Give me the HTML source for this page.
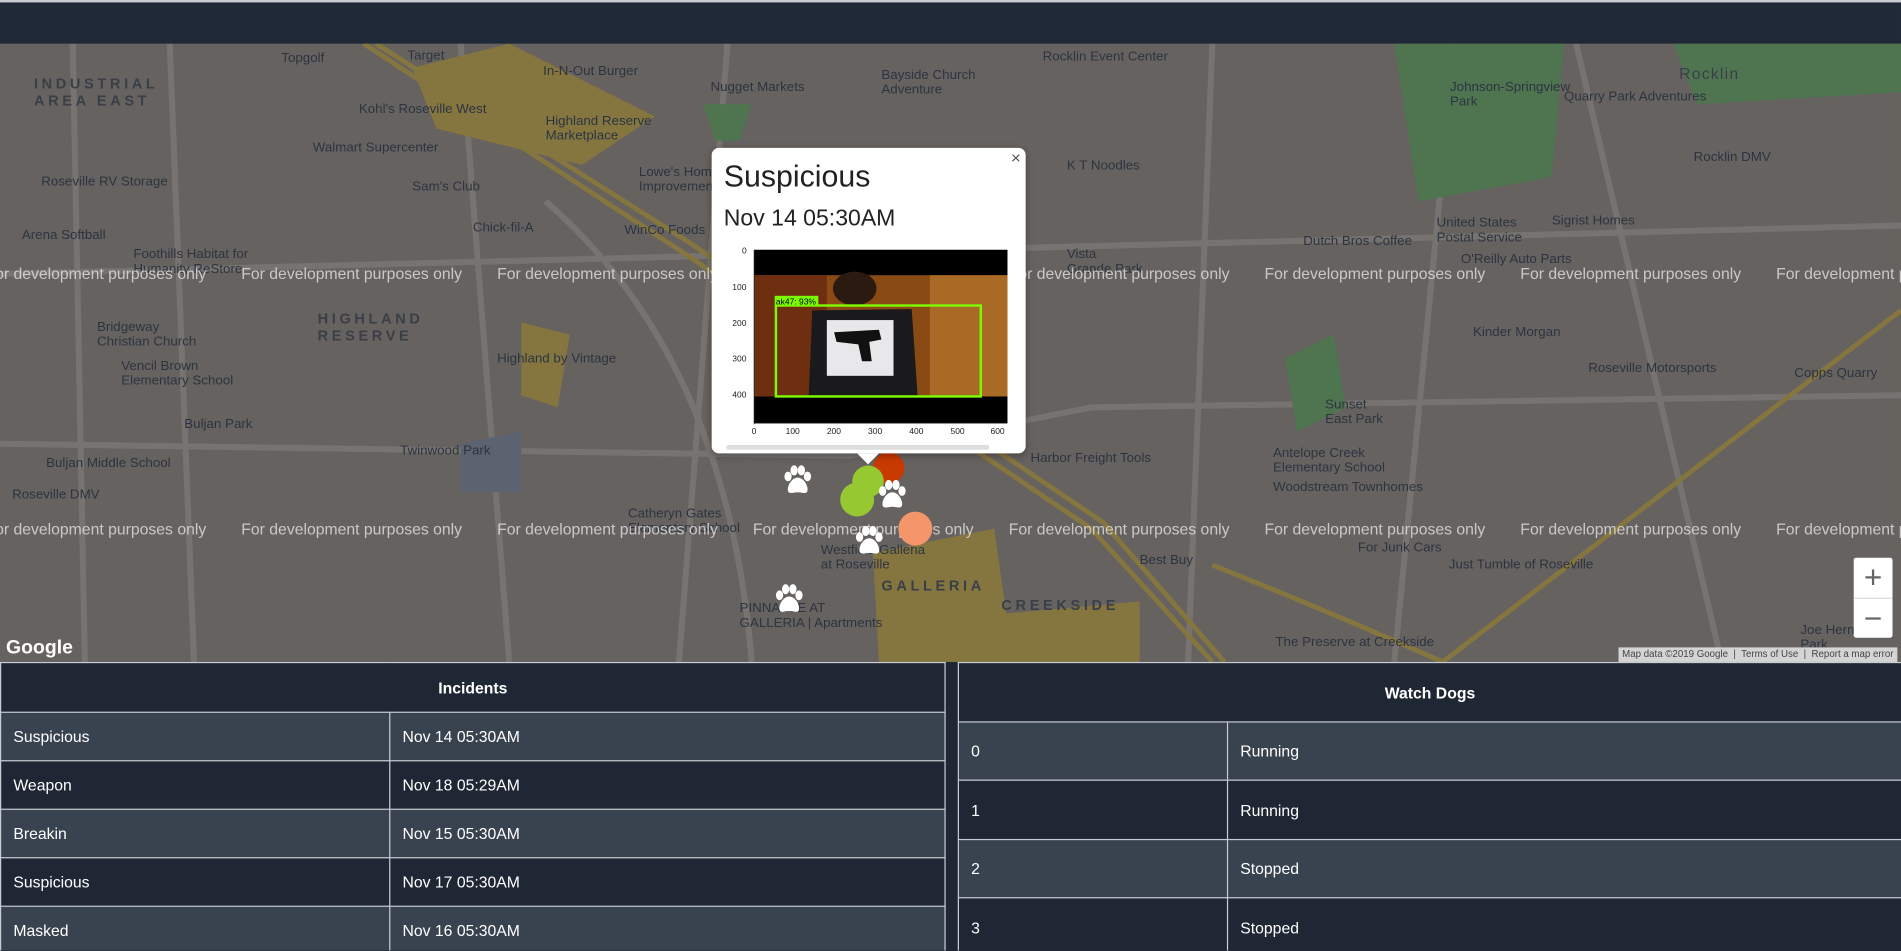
<!DOCTYPE html>
<html><head><meta charset="utf-8">
<style>
html,body{margin:0;padding:0;overflow:hidden;background:#1f2735;}
#w{position:absolute;left:0;top:0;width:1568px;height:784px;transform:scale(1.21237);transform-origin:0 0;font-family:"Liberation Sans",sans-serif;overflow:hidden;}
.top{position:absolute;left:0;top:0;width:1568px;height:36px;background:#1f2937;border-top:2px solid #c9ccd0;box-sizing:border-box;}
.map{position:absolute;left:0;top:36px;width:1568px;height:510px;background:#66625f;overflow:hidden;}
.lbl{position:absolute;color:#2c3440;font-size:11px;white-space:nowrap;}
.wm{position:absolute;color:rgba(235,235,235,.75);font-size:13px;white-space:nowrap;}
.big{position:absolute;color:#3a3f47;font-size:12px;letter-spacing:3px;font-weight:bold;}
table{border-collapse:collapse;position:absolute;color:#fff;font-size:13px;}
td,th{border:1px solid #c9ccd2;padding:0 10px;text-align:left;}
th{text-align:center;font-weight:bold;}
.a{background:#394350}.b{background:#1f2735}
.pop{position:absolute;left:587px;top:122px;width:259px;height:252px;background:#fff;border-radius:6px;box-shadow:0 2px 6px rgba(0,0,0,.3);}
.paw{position:absolute;width:26px;height:26px;}
.dot{position:absolute;border-radius:50%;}
</style></head><body><div id="w">
<div class="top"></div>
<div class="map">
<svg width="1568" height="510" style="position:absolute;left:0;top:0">
<g stroke="#777370" stroke-width="5" fill="none">
<path d="M0 190 L1568 150"/><path d="M140 0 L160 510"/><path d="M380 0 L420 510"/><path d="M600 0 L560 510"/>
<path d="M0 330 L700 340 L900 300 L1568 290"/><path d="M1000 0 L980 510"/><path d="M1200 0 L1150 510"/>
<path d="M450 130 Q600 260 620 510"/><path d="M1300 0 L1420 510"/><path d="M60 0 L70 510"/>
</g>
<g stroke="#857640" stroke-width="4" fill="none">
<path d="M300 0 L560 170 L900 400 L1000 510"/><path d="M310 0 L570 165 L910 395 L1010 510"/>
<path d="M1190 510 L1568 220"/><path d="M1000 430 Q1100 470 1190 510"/>
</g>
<path d="M340 20 L420 0 L540 60 L480 100 L360 70Z" fill="#857640"/>
<path d="M720 420 L820 400 L830 470 L940 460 L940 510 L725 510Z" fill="#857640"/>
<path d="M430 230 L470 240 L460 300 L430 290Z" fill="#857640"/>
<path d="M1150 0 L1290 0 L1280 110 L1170 130Z" fill="#4e7550"/>
<path d="M1060 260 L1100 240 L1110 300 L1070 320Z" fill="#4e7550"/>
<path d="M580 50 L620 50 L610 80 L590 80Z" fill="#4e7550"/>
<path d="M1380 0 L1568 0 L1568 40 L1400 50Z" fill="#4e7550"/>
<path d="M380 330 L430 320 L430 370 L380 370Z" fill="#5c6370"/>
</g>
</svg>
<div class="big" style="left:28px;top:26px">INDUSTRIAL<br>AREA EAST</div>
<div class="big" style="left:262px;top:220px">HIGHLAND<br>RESERVE</div>
<div class="big" style="left:727px;top:440px">GALLERIA</div>
<div class="big" style="left:826px;top:456px">CREEKSIDE</div>
<div class="lbl" style="left:232px;top:6px">Topgolf</div>
<div class="lbl" style="left:336px;top:4px">Target</div>
<div class="lbl" style="left:448px;top:17px">In-N-Out Burger</div>
<div class="lbl" style="left:586px;top:30px">Nugget Markets</div>
<div class="lbl" style="left:727px;top:20px">Bayside Church<br>Adventure</div>
<div class="lbl" style="left:860px;top:5px">Rocklin Event Center</div>
<div class="lbl" style="left:1196px;top:30px">Johnson-Springview<br>Park</div>
<div class="lbl" style="left:1290px;top:38px">Quarry Park Adventures</div>
<div class="lbl" style="left:1397px;top:88px">Rocklin DMV</div>
<div class="lbl" style="left:296px;top:48px">Kohl's Roseville West</div>
<div class="lbl" style="left:450px;top:58px">Highland Reserve<br>Marketplace</div>
<div class="lbl" style="left:258px;top:80px">Walmart Supercenter</div>
<div class="lbl" style="left:34px;top:108px">Roseville RV Storage</div>
<div class="lbl" style="left:340px;top:112px">Sam's Club</div>
<div class="lbl" style="left:527px;top:100px">Lowe's Home<br>Improvement</div>
<div class="lbl" style="left:880px;top:95px">K T Noodles</div>
<div class="lbl" style="left:1185px;top:142px">United States<br>Postal Service</div>
<div class="lbl" style="left:1280px;top:140px">Sigrist Homes</div>
<div class="lbl" style="left:18px;top:152px">Arena Softball</div>
<div class="lbl" style="left:390px;top:146px">Chick-fil-A</div>
<div class="lbl" style="left:515px;top:148px">WinCo Foods</div>
<div class="lbl" style="left:1075px;top:157px">Dutch Bros Coffee</div>
<div class="lbl" style="left:110px;top:168px">Foothills Habitat for<br>Humanity ReStore</div>
<div class="lbl" style="left:1205px;top:172px">O'Reilly Auto Parts</div>
<div class="lbl" style="left:880px;top:168px">Vista<br>Grande Park</div>
<div class="lbl" style="left:80px;top:228px">Bridgeway<br>Christian Church</div>
<div class="lbl" style="left:100px;top:260px">Vencil Brown<br>Elementary School</div>
<div class="lbl" style="left:1215px;top:232px">Kinder Morgan</div>
<div class="lbl" style="left:410px;top:254px">Highland by Vintage</div>
<div class="lbl" style="left:1310px;top:262px">Roseville Motorsports</div>
<div class="lbl" style="left:1480px;top:266px">Copps Quarry</div>
<div class="lbl" style="left:1093px;top:292px">Sunset<br>East Park</div>
<div class="lbl" style="left:152px;top:308px">Buljan Park</div>
<div class="lbl" style="left:330px;top:330px">Twinwood Park</div>
<div class="lbl" style="left:38px;top:340px">Buljan Middle School</div>
<div class="lbl" style="left:850px;top:336px">Harbor Freight Tools</div>
<div class="lbl" style="left:1050px;top:332px">Antelope Creek<br>Elementary School</div>
<div class="lbl" style="left:10px;top:366px">Roseville DMV</div>
<div class="lbl" style="left:1050px;top:360px">Woodstream Townhomes</div>
<div class="lbl" style="left:518px;top:382px">Catheryn Gates<br>Elementary School</div>
<div class="lbl" style="left:677px;top:412px">Westfield Galleria<br>at Roseville</div>
<div class="lbl" style="left:940px;top:420px">Best Buy</div>
<div class="lbl" style="left:1195px;top:424px">Just Tumble of Roseville</div>
<div class="lbl" style="left:1120px;top:410px">For Junk Cars</div>
<div class="lbl" style="left:610px;top:460px">PINNACLE AT<br>GALLERIA | Apartments</div>
<div class="lbl" style="left:1052px;top:488px">The Preserve at Creekside</div>
<div class="lbl" style="left:1485px;top:478px">Joe Hernandez<br>Park</div>
<div class="lbl" style="left:1385px;top:17px;font-size:13px;letter-spacing:1px;color:#3a3f47">Rocklin</div>
<div class="wm" style="left:-12px;top:182px">For development purposes only</div>
<div class="wm" style="left:199px;top:182px">For development purposes only</div>
<div class="wm" style="left:410px;top:182px">For development purposes only</div>
<div class="wm" style="left:832px;top:182px">For development purposes only</div>
<div class="wm" style="left:1043px;top:182px">For development purposes only</div>
<div class="wm" style="left:1254px;top:182px">For development purposes only</div>
<div class="wm" style="left:1465px;top:182px">For development purposes only</div>
<div class="wm" style="left:-12px;top:393px">For development purposes only</div>
<div class="wm" style="left:199px;top:393px">For development purposes only</div>
<div class="wm" style="left:410px;top:393px">For development purposes only</div>
<div class="wm" style="left:621px;top:393px">For development purposes only</div>
<div class="wm" style="left:832px;top:393px">For development purposes only</div>
<div class="wm" style="left:1043px;top:393px">For development purposes only</div>
<div class="wm" style="left:1254px;top:393px">For development purposes only</div>
<div class="wm" style="left:1465px;top:393px">For development purposes only</div>
<div style="position:absolute;left:5px;top:490px;color:#fff;font-size:16px;font-weight:bold">Google</div>
<div style="position:absolute;left:1335px;top:498px;height:12px;background:#d4d4d4;color:#444;font-size:8px;line-height:12px;white-space:nowrap;padding:0 3px">Map data ©2019 Google &nbsp;|&nbsp; Terms of Use &nbsp;|&nbsp; Report a map error</div>
<div style="position:absolute;left:1529px;top:424px;width:32px;height:66px;background:#fff;border-radius:2px;color:#666;font-size:26px;text-align:center;line-height:32px"><div style="height:33px;border-bottom:1px solid #ddd">+</div><div>−</div></div>
</div>
<!-- markers -->
<div class="dot" style="left:720px;top:373px;width:26px;height:26px;background:#c83a00"></div>
<div class="dot" style="left:703px;top:384px;width:26px;height:26px;background:#96c832"></div>
<div class="dot" style="left:693px;top:398px;width:28px;height:28px;background:#96c832"></div>
<div class="dot" style="left:741px;top:422px;width:28px;height:28px;background:#f4956a"></div>
<svg width="0" height="0" style="position:absolute"><defs><g id="p" fill="#fff"><ellipse cx="5" cy="10" rx="3" ry="4"/><ellipse cx="10" cy="5" rx="3" ry="4.2"/><ellipse cx="16" cy="5" rx="3" ry="4.2"/><ellipse cx="21" cy="10" rx="3" ry="4"/><path d="M13 11 C8 11 4 18 5 22 C6 25 10 23 13 23 C16 23 20 25 21 22 C22 18 18 11 13 11Z"/></g></defs></svg>
<svg class="paw" style="left:645px;top:383px"><use href="#p"/></svg>
<svg class="paw" style="left:723px;top:395px"><use href="#p"/></svg>
<svg class="paw" style="left:704px;top:433px"><use href="#p"/></svg>
<svg class="paw" style="left:638px;top:481px"><use href="#p"/></svg>
<!-- popup -->
<div class="pop">
<div style="position:absolute;right:4px;top:0;font-size:14px;color:#555">×</div>
<div style="position:absolute;left:10px;top:10px;font-size:25px;color:#222">Suspicious</div>
<div style="position:absolute;left:10px;top:48px;font-size:19px;color:#222">Nov 14 05:30AM</div>
<svg style="position:absolute;left:0;top:76px" width="259" height="170" font-family="Liberation Sans" font-size="7" fill="#222">
<rect x="35" y="8" width="209" height="143" fill="#000"/>
<rect x="35" y="29" width="209" height="100" fill="#8a4a14"/>
<rect x="35" y="29" width="60" height="100" fill="#6e2e10"/>
<rect x="180" y="29" width="64" height="100" fill="#a86a24"/>
<ellipse cx="118" cy="40" rx="18" ry="14" fill="#2a1a10"/>
<path d="M83 58 L165 57 L170 130 L80 130Z" fill="#1a1a1c"/>
<rect x="95" y="66" width="55" height="46" fill="#e8e8ea"/>
<path d="M101 76 L138 74 L140 82 L130 84 L132 100 L124 100 L121 86 L103 84Z" fill="#111"/>
<rect x="53" y="54" width="169" height="75" fill="none" stroke="#7cfc00" stroke-width="2"/>
<rect x="52" y="46" width="36" height="8" fill="#7cfc00"/><text x="53" y="53" fill="#000" font-size="7">ak47: 93%</text>
<g stroke="#222" stroke-width=".6"><line x1="35" y1="8" x2="35" y2="152"/><line x1="35" y1="151" x2="244" y2="151"/></g>
<text x="25" y="11">0</text><text x="17" y="41">100</text><text x="17" y="71">200</text><text x="17" y="100">300</text><text x="17" y="130">400</text>
<text x="33" y="160">0</text><text x="61" y="160">100</text><text x="95" y="160">200</text><text x="129" y="160">300</text><text x="163" y="160">400</text><text x="197" y="160">500</text><text x="230" y="160">600</text>
</svg>
<div style="position:absolute;left:12px;top:245px;width:217px;height:4px;background:#ddd;border-radius:2px"></div>
<div style="position:absolute;left:120px;top:252px;width:0;height:0;border-left:9px solid transparent;border-right:9px solid transparent;border-top:9px solid #fff"></div>
</div>
<!-- tables -->
<table style="left:0;top:546px;width:780px">
<tr class="b" style="height:41px"><th colspan="2">Incidents</th></tr>
<tr class="a" style="height:40px"><td style="width:300px">Suspicious</td><td>Nov 14 05:30AM</td></tr>
<tr class="b" style="height:40px"><td>Weapon</td><td>Nov 18 05:29AM</td></tr>
<tr class="a" style="height:40px"><td>Breakin</td><td>Nov 15 05:30AM</td></tr>
<tr class="b" style="height:40px"><td>Suspicious</td><td>Nov 17 05:30AM</td></tr>
<tr class="a" style="height:40px"><td>Masked</td><td>Nov 16 05:30AM</td></tr>
</table>
<table style="left:790px;top:546px;width:779px">
<tr class="b" style="height:49px"><th colspan="2">Watch Dogs</th></tr>
<tr class="a" style="height:48px"><td style="width:201px">0</td><td>Running</td></tr>
<tr class="b" style="height:49px"><td>1</td><td>Running</td></tr>
<tr class="a" style="height:48px"><td>2</td><td>Stopped</td></tr>
<tr class="b" style="height:49px"><td>3</td><td>Stopped</td></tr>
</table>
</div></body></html>
